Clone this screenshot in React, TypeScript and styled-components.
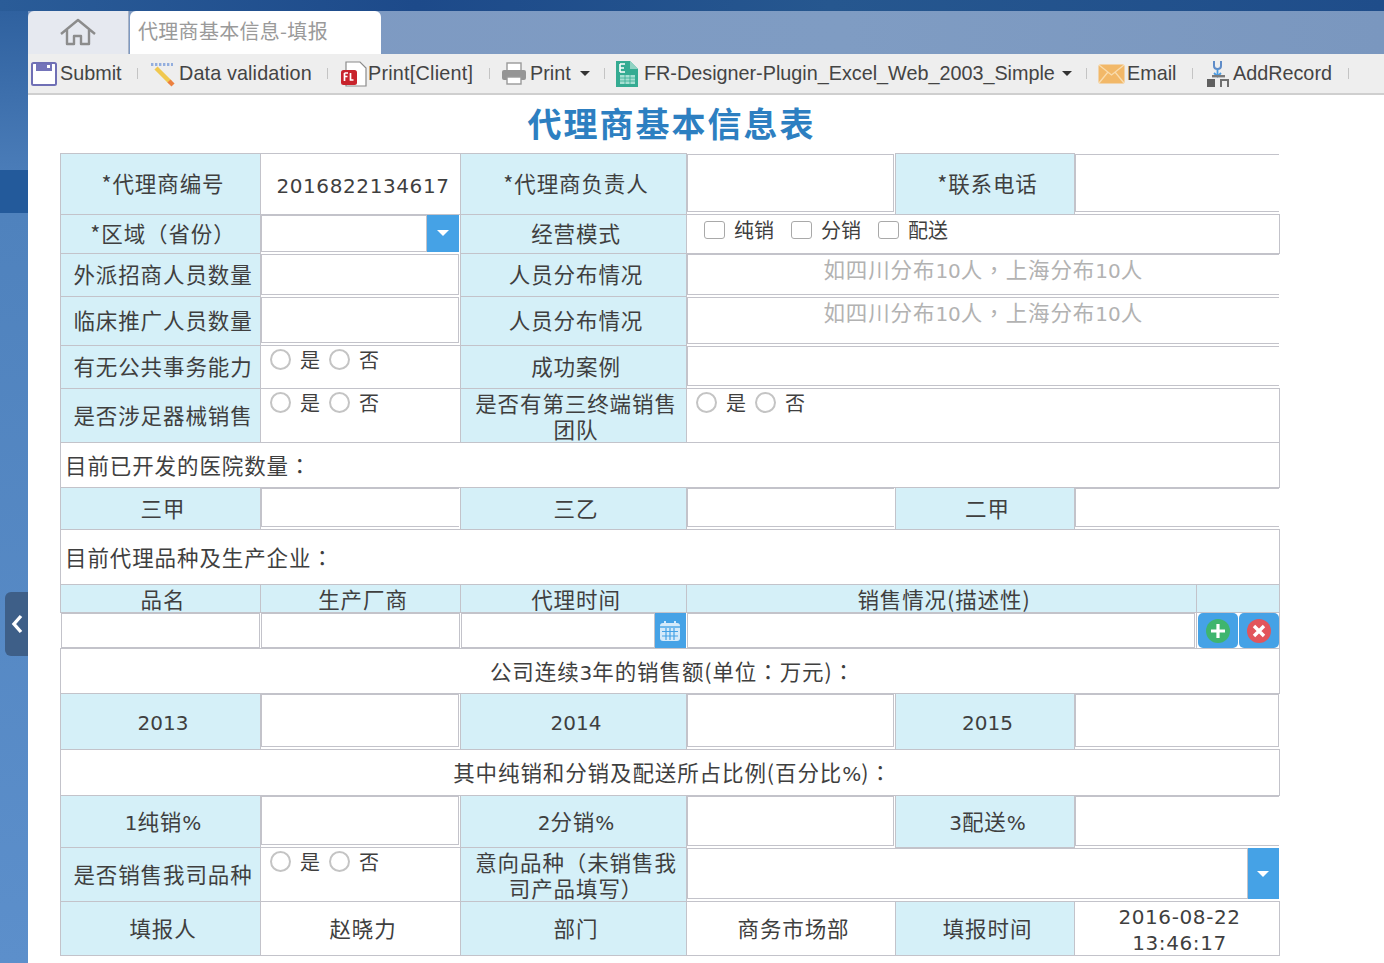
import React from 'react';
import styled, { createGlobalStyle } from 'styled-components';

const CJK = '"Noto Sans CJK SC", "DejaVu Sans", sans-serif';
const LATIN = '"DejaVu Sans", "Noto Sans CJK SC", sans-serif';
const LINE = '#c3c3ca';
const BLUE = '#45a2e6';

const GlobalStyle = createGlobalStyle`
  html, body {
    margin: 0;
    padding: 0;
    height: 100%;
    overflow: hidden;
    background: #fff;
  }
  * {
    box-sizing: border-box;
  }
`;

const Page = styled.div`
  position: relative;
  width: 1384px;
  height: 963px;
  display: flex;
  flex-direction: column;
  overflow: hidden;
`;

const TopBar = styled.div`
  height: 11px;
  flex: none;
  background: linear-gradient(90deg, #2a5c98 0%, #1d4a8a 30%, #26578f 60%, #1f4d8a 100%);
`;

const Body = styled.div`
  flex: 1;
  display: flex;
  min-height: 0;
`;

const Sidebar = styled.div`
  width: 28px;
  flex: none;
  display: flex;
  flex-direction: column;
`;

const SideTop = styled.div`
  height: 159px;
  background: linear-gradient(180deg, #2f619f 0%, #4a7cb8 100%);
`;

const SideActive = styled.div`
  height: 43px;
  background: #235a9b;
`;

const SideRest = styled.div`
  flex: 1;
  background: linear-gradient(180deg, #4f82bd 0%, #5c8fcb 100%);
`;

const Main = styled.div`
  flex: 1;
  display: flex;
  flex-direction: column;
  min-width: 0;
`;

const TabStrip = styled.div`
  height: 43px;
  flex: none;
  display: flex;
  background: linear-gradient(90deg, #7d99c2 0%, #7f9cc3 60%, #7a97bf 100%);
`;

const HomeTab = styled.div`
  width: 101px;
  display: flex;
  align-items: center;
  justify-content: center;
  background: #e6e9f0;
  border-radius: 6px 0 0 0;
  border-right: 1px solid #aab4c6;
`;

const ActiveTab = styled.div`
  width: 251px;
  margin-left: 1px;
  padding: 0 0 4px 8px;
  display: flex;
  align-items: center;
  background: #fff;
  border-radius: 6px 6px 0 0;
  color: #9a9a9a;
  font: 20px ${CJK};
  letter-spacing: 0.3px;
`;

const Toolbar = styled.div`
  height: 41px;
  flex: none;
  display: flex;
  align-items: center;
  padding-left: 3px;
  background: #eeeeee;
  border-bottom: 2px solid #cfcfcf;
  color: #444;
  font: 19.8px "Liberation Sans", sans-serif;
`;

const ToolItem = styled.div<{ $gap: number }>`
  display: flex;
  align-items: center;
  margin-right: ${(p) => p.$gap}px;
  white-space: nowrap;
`;

const ToolLabel = styled.span<{ $w: number; $ml: number; $ls?: number }>`
  display: inline-block;
  width: ${(p) => p.$w}px;
  margin-left: ${(p) => p.$ml}px;
  letter-spacing: ${(p) => p.$ls || 0}px;
  white-space: nowrap;
`;

const ToolSep = styled.div<{ $gap: number }>`
  width: 1px;
  height: 11px;
  background: #c4c4c4;
  margin-right: ${(p) => p.$gap}px;
`;

const Caret = styled.span<{ $ml: number }>`
  width: 0;
  height: 0;
  margin-left: ${(p) => p.$ml}px;
  border-left: 5px solid transparent;
  border-right: 5px solid transparent;
  border-top: 5px solid #333;
`;

const Content = styled.div`
  flex: 1;
  padding-left: 32px;
  background: #fff;
`;

const Title = styled.div`
  width: 1219px;
  height: 58px;
  padding-top: 5px;
  margin-left: 2px;
  text-align: center;
  color: #2d7fc1;
  font: bold 34px/46px ${CJK};
  letter-spacing: 2px;
`;

const Sheet = styled.table`
  width: 1219px;
  table-layout: fixed;
  border-collapse: collapse;
  color: #3f3f3f;
  font: 21.5px/26px ${CJK};
  letter-spacing: 0.9px;
`;

const Num = styled.span`
  font-family: ${LATIN};
  font-size: 20px;
  line-height: 1;
  letter-spacing: 0;
`;

// fullwidth punctuation sits centred in the TC cut, as in the picture
const Punct = styled.span`
  font-family: "Noto Sans CJK TC", sans-serif;
  line-height: 1;
`;

const Row = styled.tr<{ $h: number }>`
  height: ${(p) => p.$h}px;
`;

const Label = styled.td<{ $flat?: boolean }>`
  padding: 0 0 ${(p) => (p.$flat ? 0 : 2)}px 5px;
  border: 1px solid ${LINE};
  background: #d5f0f8;
  text-align: center;
  vertical-align: middle;
`;

const Plain = styled.td<{ $align?: string }>`
  padding: 0 0 1px ${(p) => (p.$align ? 4 : 5)}px;
  border: 1px solid ${LINE};
  background: #fff;
  text-align: ${(p) => p.$align || 'center'};
  vertical-align: middle;
`;

const Digits = styled.span`
  font-family: ${LATIN};
  font-size: 20px;
  line-height: 1;
  letter-spacing: 0.6px;
`;

const Field = styled.td`
  padding: 0;
  height: 1px;
  border: none;
  background: #fff;
`;

const Framed = styled(Field)`
  border: 1px solid ${LINE};
`;

const BoxWrap = styled.div<{ $flush?: boolean }>`
  display: flex;
  height: 100%;
  padding: ${(p) => (p.$flush ? '0 1px 0 0' : '0 1px 2px 0')};
`;

const Box = styled.div<{ $open?: boolean }>`
  flex: 1;
  display: flex;
  justify-content: center;
  align-items: flex-start;
  border: 1px solid ${LINE};
  border-right-width: ${(p) => (p.$open ? 0 : 1)}px;
  background: #fff;
  color: #b2b2b2;
  line-height: 28px;
`;

const DropButton = styled.div<{ $w: number }>`
  width: ${(p) => p.$w}px;
  flex: none;
  display: flex;
  align-items: center;
  justify-content: center;
  background: ${BLUE};
`;

const DownArrow = styled.span`
  width: 0;
  height: 0;
  border-left: 6px solid transparent;
  border-right: 6px solid transparent;
  border-top: 6px solid #fff;
`;

const Choices = styled.div<{ $left: number; $top: number }>`
  height: 100%;
  display: flex;
  align-items: flex-start;
  padding: ${(p) => p.$top}px 0 0 ${(p) => p.$left}px;
  font-size: 20px;
  line-height: 21px;
  letter-spacing: 0;
  color: #3f3f3f;
`;

const Radio = styled.span<{ $first?: boolean }>`
  width: 21px;
  height: 21px;
  margin-right: 9px;
  margin-left: ${(p) => (p.$first ? 0 : 9)}px;
  flex: none;
  border: 2px solid #c4c4c4;
  border-radius: 50%;
  background: #fff;
`;

const Check = styled.span`
  width: 21px;
  height: 18px;
  margin: 2px 9px 0 0;
  flex: none;
  border: 1.5px solid #a9a9a9;
  border-radius: 3px;
  background: #fff;
`;

const CheckText = styled.span`
  margin-right: 17px;
`;

const ActionCell = styled.td`
  padding: 0 0 0 1px;
  height: 1px;
  border: 1px solid ${LINE};
  border-bottom: none;
  background: #fff;
`;

const Actions = styled.div`
  height: 100%;
  display: flex;
  gap: 1px;
`;

const ActionButton = styled.div`
  flex: 1;
  display: flex;
  align-items: center;
  justify-content: center;
  background: ${BLUE};
  border-radius: 5px;
`;

const BackHandle = styled.div`
  position: absolute;
  left: 5px;
  top: 592px;
  width: 23px;
  height: 64px;
  display: flex;
  align-items: center;
  justify-content: center;
  background: #3e5f88;
  border-radius: 6px 0 0 6px;
`;

const HomeIcon = () => (
  <svg width="38" height="30" viewBox="0 0 38 30" fill="none" stroke="#8c8c8c" strokeWidth="2.4">
    <path d="M2 16 L19 2 L36 16 M30 12 V26 H22 V18 H15 V26 H8 V12" strokeLinejoin="round" />
  </svg>
);

const SaveIcon = () => (
  <svg width="26" height="24" viewBox="0 0 26 24">
    <rect x="1" y="1" width="24" height="22" rx="1.5" fill="#fff" stroke="#6f6fb5" strokeWidth="2" />
    <path d="M5 2 H21 V9 H5 Z" fill="#7474ba" />
    <rect x="16" y="3" width="3" height="3" fill="#fff" />
  </svg>
);

const WandIcon = () => (
  <svg width="26" height="26" viewBox="0 0 26 26">
    <path d="M1 3.5 H23" stroke="#93aede" strokeWidth="3" strokeDasharray="2.4 1.6" />
    <path d="M6 7 L20 21" stroke="#f0c850" strokeWidth="4.4" />
    <path d="M19 20 L23 24" stroke="#ec8040" strokeWidth="4.4" />
  </svg>
);

const ClientPrintIcon = () => (
  <svg width="28" height="26" viewBox="0 0 28 26">
    <path d="M6 1 H20 L26 7 V25 H6 Z" fill="#fff" stroke="#8a8a8a" strokeWidth="1.2" />
    <rect x="1" y="9" width="16" height="15" rx="2.5" fill="#c8232c" />
    <path d="M4.5 12 H8 M4.5 12 V20 M4.5 15.5 H7.5 M10.5 12 V19 H13.5" stroke="#fff" strokeWidth="1.7" fill="none" />
  </svg>
);

const PrinterIcon = () => (
  <svg width="26" height="24" viewBox="0 0 26 24">
    <rect x="6" y="1" width="14" height="8" fill="#fff" stroke="#999" strokeWidth="1.4" />
    <rect x="1" y="8" width="24" height="10" rx="2" fill="#959595" />
    <rect x="6" y="15" width="14" height="7" fill="#fff" stroke="#999" strokeWidth="1.4" />
  </svg>
);

const ExcelIcon = () => (
  <svg width="24" height="28" viewBox="0 0 24 28">
    <path d="M1 1 H15 L23 9 V27 H1 Z" fill="#35ab92" />
    <path d="M15 1 L23 9 H15 Z" fill="#8fd3c3" />
    <path d="M5 4 H10 M5 4 V12 M5 8 H9 M5 12 H10" stroke="#fff" strokeWidth="1.6" fill="none" />
    <rect x="5" y="15" width="15" height="9" fill="#a6dfd2" />
    <path d="M5 18 H20 M5 21 H20 M10 15 V24 M15 15 V24" stroke="#35ab92" strokeWidth="0.8" />
  </svg>
);

const MailIcon = () => (
  <svg width="27" height="20" viewBox="0 0 27 20">
    <rect x="0.5" y="0.5" width="26" height="19" rx="1.5" fill="#f2b868" />
    <path d="M1 1 L13.5 11 L26 1 M1 19 L10 8 M26 19 L17 8" stroke="#f9dcae" strokeWidth="1.3" fill="none" />
  </svg>
);

const RecordIcon = () => (
  <svg width="24" height="27" viewBox="0 0 24 27">
    <path d="M8 1 V6 Q8 9 11.5 9 Q15 9 15 6 V1" stroke="#5f8cc8" strokeWidth="2" fill="none" />
    <path d="M11.5 9 V16 M8 13 L11.5 16.5 L15 13" stroke="#4a9ae0" strokeWidth="1.8" fill="none" />
    <rect x="1" y="19" width="8" height="8" fill="#606060" />
    <rect x="6" y="15" width="13" height="2.4" fill="#7a7a7a" />
    <path d="M15 27 V20 H22 V27" stroke="#707070" strokeWidth="2" fill="none" />
  </svg>
);

const CalendarIcon = () => (
  <svg width="24" height="24" viewBox="0 0 24 24">
    <rect x="2" y="4" width="20" height="18" rx="3" fill="#d5eafa" />
    <path d="M7 2 V6 M17 2 V6" stroke="#d5eafa" strokeWidth="2" />
    <path d="M2 8 H22" stroke={BLUE} strokeWidth="1.4" />
    <path d="M4 12.5 H20 M4 17 H20 M8 9 V21 M12 9 V21 M16 9 V21" stroke={BLUE} strokeWidth="1.2" />
  </svg>
);

const PlusIcon = () => (
  <svg width="26" height="24" viewBox="0 0 26 24">
    <circle cx="13" cy="12" r="12" fill="#3fb56e" />
    <path d="M13 5 V19 M6 12 H20" stroke="#fff" strokeWidth="3.2" />
  </svg>
);

const CloseIcon = () => (
  <svg width="26" height="24" viewBox="0 0 26 24">
    <circle cx="13" cy="12" r="12" fill="#e2555c" />
    <path d="M8 7 L18 17 M18 7 L8 17" stroke="#fff" strokeWidth="3.4" />
  </svg>
);

const Input = ({ span, open, flush, children }: { span?: number; open?: boolean; flush?: boolean; children?: React.ReactNode }) => (
  <Field colSpan={span}>
    <BoxWrap $flush={flush}>
      <Box $open={open}>{children}</Box>
    </BoxWrap>
  </Field>
);

const DistributionHint = () => (
  <span>
    如四川分布<Num>10</Num>人<Punct>，</Punct>上海分布<Num>10</Num>人
  </span>
);

const YesNo = ({ left }: { left: number }) => (
  <Choices $left={left} $top={3}>
    <Radio $first />
    是
    <Radio />
    否
  </Choices>
);

const App = () => (
  <Page>
    <GlobalStyle />
    <TopBar />
    <Body>
      <Sidebar>
        <SideTop />
        <SideActive />
        <SideRest />
      </Sidebar>
      <Main>
        <TabStrip>
          <HomeTab>
            <HomeIcon />
          </HomeTab>
          <ActiveTab>代理商基本信息-填报</ActiveTab>
        </TabStrip>
        <Toolbar>
          <ToolItem $gap={15}>
            <SaveIcon />
            <ToolLabel $w={62} $ml={3}>Submit</ToolLabel>
          </ToolItem>
          <ToolSep $gap={12} />
          <ToolItem $gap={15}>
            <WandIcon />
            <ToolLabel $w={133} $ml={3} $ls={0.13}>Data validation</ToolLabel>
          </ToolItem>
          <ToolSep $gap={12} />
          <ToolItem $gap={16}>
            <ClientPrintIcon />
            <ToolLabel $w={105} $ml={0} $ls={0.23}>Print[Client]</ToolLabel>
          </ToolItem>
          <ToolSep $gap={11} />
          <ToolItem $gap={14}>
            <PrinterIcon />
            <ToolLabel $w={41} $ml={3}>Print</ToolLabel>
            <Caret $ml={9} />
          </ToolItem>
          <ToolSep $gap={10} />
          <ToolItem $gap={14}>
            <ExcelIcon />
            <ToolLabel $w={411} $ml={5}>FR-Designer-Plugin_Excel_Web_2003_Simple</ToolLabel>
            <Caret $ml={7} />
          </ToolItem>
          <ToolSep $gap={11} />
          <ToolItem $gap={15}>
            <MailIcon />
            <ToolLabel $w={50} $ml={2}>Email</ToolLabel>
          </ToolItem>
          <ToolSep $gap={13} />
          <ToolItem $gap={15}>
            <RecordIcon />
            <ToolLabel $w={100} $ml={3}>AddRecord</ToolLabel>
          </ToolItem>
          <ToolSep $gap={0} />
        </Toolbar>
        <Content>
          <Title>代理商基本信息表</Title>
          <Sheet>
            <colgroup>
              <col width="200" />
              <col width="200" />
              <col width="226" />
              <col width="209" />
              <col width="179" />
              <col width="122" />
              <col width="83" />
            </colgroup>
            <tbody>
              <Row $h={61}>
                <Label>*代理商编号</Label>
                <Plain><Digits>2016822134617</Digits></Plain>
                <Label>*代理商负责人</Label>
                <Input />
                <Label>*联系电话</Label>
                <Input span={2} open />
              </Row>
              <Row $h={39}>
                <Label>*区域<Punct>（</Punct>省份<Punct>）</Punct></Label>
                <Field>
                  <BoxWrap>
                    <Box />
                    <DropButton $w={32}>
                      <DownArrow />
                    </DropButton>
                  </BoxWrap>
                </Field>
                <Label>经营模式</Label>
                <Framed colSpan={4}>
                  <Choices $left={17} $top={4}>
                    <Check />
                    <CheckText>纯销</CheckText>
                    <Check />
                    <CheckText>分销</CheckText>
                    <Check />
                    <CheckText>配送</CheckText>
                  </Choices>
                </Framed>
              </Row>
              <Row $h={43}>
                <Label>外派招商人员数量</Label>
                <Input />
                <Label>人员分布情况</Label>
                <Input span={4} open>
                  <DistributionHint />
                </Input>
              </Row>
              <Row $h={49}>
                <Label>临床推广人员数量</Label>
                <Input />
                <Label>人员分布情况</Label>
                <Input span={4} open>
                  <DistributionHint />
                </Input>
              </Row>
              <Row $h={43}>
                <Label>有无公共事务能力</Label>
                <Framed>
                  <YesNo left={9} />
                </Framed>
                <Label>成功案例</Label>
                <Input span={4} open />
              </Row>
              <Row $h={54}>
                <Label>是否涉足器械销售</Label>
                <Framed>
                  <YesNo left={9} />
                </Framed>
                <Label $flat>是否有第三终端销售团队</Label>
                <Framed colSpan={4}>
                  <YesNo left={9} />
                </Framed>
              </Row>
              <Row $h={45}>
                <Plain colSpan={7} $align="left">目前已开发的医院数量<Punct>：</Punct></Plain>
              </Row>
              <Row $h={42}>
                <Label>三甲</Label>
                <Input open />
                <Label>三乙</Label>
                <Input open />
                <Label>二甲</Label>
                <Input span={2} open />
              </Row>
              <Row $h={55}>
                <Plain colSpan={7} $align="left">目前代理品种及生产企业<Punct>：</Punct></Plain>
              </Row>
              <Row $h={28}>
                <Label $flat>品名</Label>
                <Label $flat>生产厂商</Label>
                <Label $flat>代理时间</Label>
                <Label $flat colSpan={3}>销售情况(描述性)</Label>
                <Label $flat />
              </Row>
              <Row $h={36}>
                <Input flush />
                <Input flush />
                <Field>
                  <BoxWrap $flush>
                    <Box />
                    <DropButton $w={31}>
                      <CalendarIcon />
                    </DropButton>
                  </BoxWrap>
                </Field>
                <Input span={3} flush />
                <ActionCell>
                  <Actions>
                    <ActionButton>
                      <PlusIcon />
                    </ActionButton>
                    <ActionButton>
                      <CloseIcon />
                    </ActionButton>
                  </Actions>
                </ActionCell>
              </Row>
              <Row $h={45}>
                <Plain colSpan={7}>公司连续<Num>3</Num>年的销售额(单位<Punct>：</Punct>万元)<Punct>：</Punct></Plain>
              </Row>
              <Row $h={56}>
                <Label><Num>2013</Num></Label>
                <Input />
                <Label><Num>2014</Num></Label>
                <Input />
                <Label><Num>2015</Num></Label>
                <Input span={2} />
              </Row>
              <Row $h={46}>
                <Plain colSpan={7}>其中纯销和分销及配送所占比例(百分比<Num>%</Num>)<Punct>：</Punct></Plain>
              </Row>
              <Row $h={52}>
                <Label><Num>1</Num>纯销<Num>%</Num></Label>
                <Input />
                <Label><Num>2</Num>分销<Num>%</Num></Label>
                <Input />
                <Label><Num>3</Num>配送<Num>%</Num></Label>
                <Input span={2} open />
              </Row>
              <Row $h={54}>
                <Label>是否销售我司品种</Label>
                <Framed>
                  <YesNo left={9} />
                </Framed>
                <Label $flat>意向品种<Punct>（</Punct>未销售我司产品填写<Punct>）</Punct></Label>
                <Field colSpan={4}>
                  <BoxWrap>
                    <Box />
                    <DropButton $w={31}>
                      <DownArrow />
                    </DropButton>
                  </BoxWrap>
                </Field>
              </Row>
              <Row $h={54}>
                <Label>填报人</Label>
                <Plain>赵晓力</Plain>
                <Label>部门</Label>
                <Plain>商务市场部</Plain>
                <Label>填报时间</Label>
                <Plain colSpan={2}><Digits>2016-08-22 13:46:17</Digits></Plain>
              </Row>
            </tbody>
          </Sheet>
        </Content>
      </Main>
    </Body>
    <BackHandle>
      <svg width="14" height="22" viewBox="0 0 14 22" fill="none" stroke="#fff" strokeWidth="3.4">
        <path d="M11 3 L4 11 L11 19" />
      </svg>
    </BackHandle>
  </Page>
);

export default App;
